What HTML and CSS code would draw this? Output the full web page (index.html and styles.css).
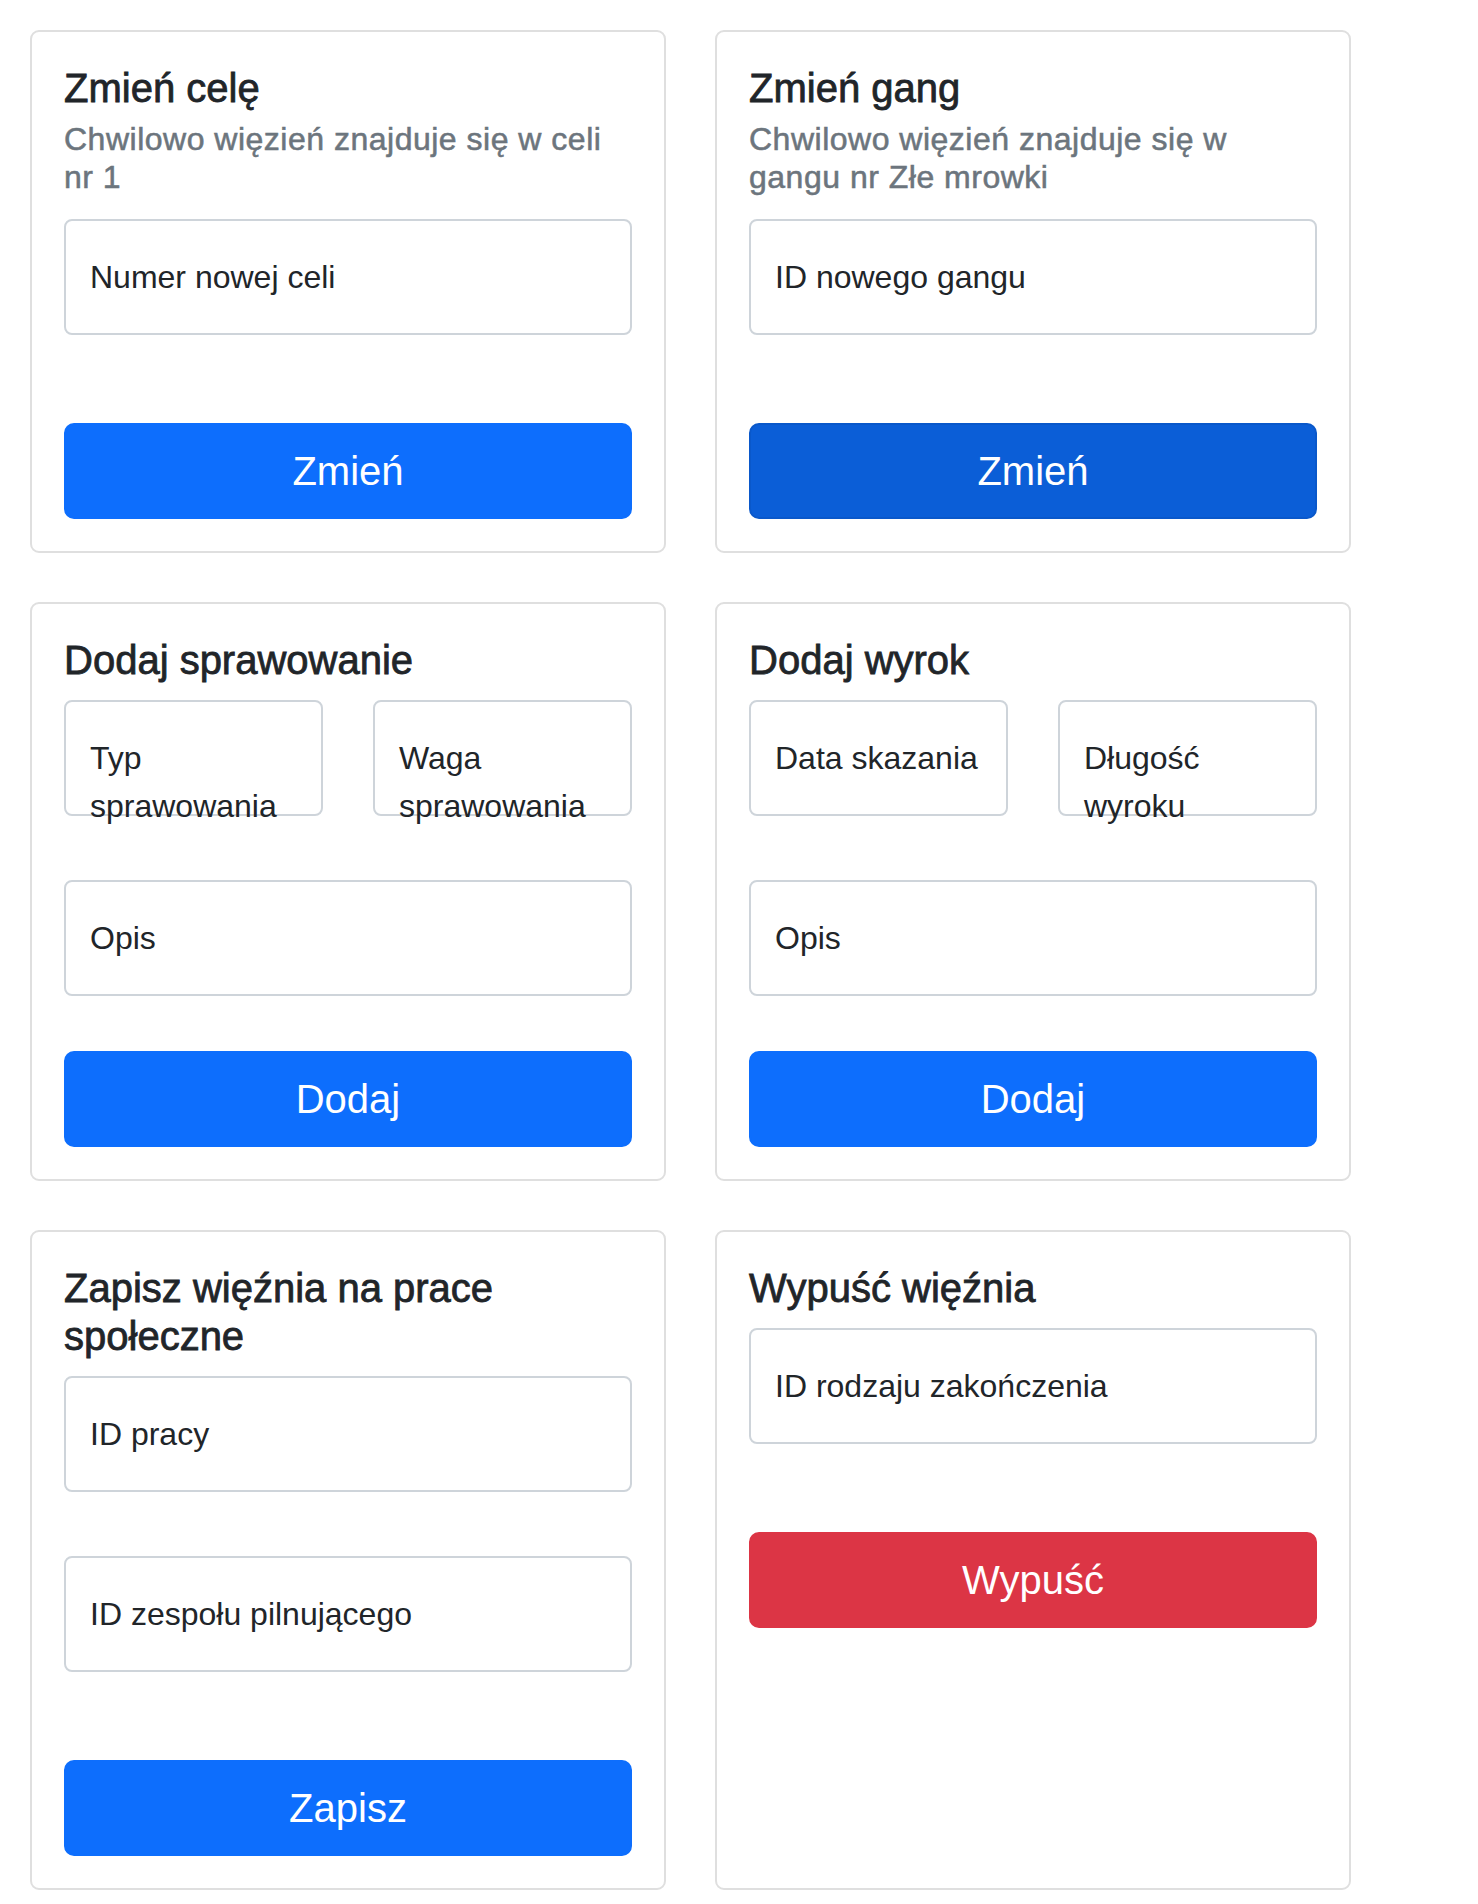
FILE: index.html
```html
<!DOCTYPE html>
<html lang="pl">
<head>
<meta charset="utf-8">
<title>Więzień – akcje</title>
<link rel="stylesheet" href="styles.css">
</head>
<body>
<main class="grid">
  <section class="card">
    <h5 class="card-title">Zmień celę</h5>
    <h6 class="card-subtitle">Chwilowo więzień znajduje się w celi nr 1</h6>
    <div class="field">
      <input class="control" type="text" id="cela">
      <label for="cela">Numer nowej celi</label>
    </div>
    <button class="btn btn-primary gap-long">Zmień</button>
  </section>

  <section class="card">
    <h5 class="card-title">Zmień gang</h5>
    <h6 class="card-subtitle">Chwilowo więzień znajduje się w gangu nr Złe mrowki</h6>
    <div class="field">
      <input class="control" type="text" id="gang">
      <label for="gang">ID nowego gangu</label>
    </div>
    <button class="btn btn-primary btn-active gap-long">Zmień</button>
  </section>

  <section class="card">
    <h5 class="card-title">Dodaj sprawowanie</h5>
    <div class="field-row">
      <div class="field">
        <input class="control" type="text" id="typ">
        <label for="typ">Typ sprawowania</label>
      </div>
      <div class="field">
        <input class="control" type="text" id="waga">
        <label for="waga">Waga sprawowania</label>
      </div>
    </div>
    <div class="field">
      <input class="control" type="text" id="opis1">
      <label for="opis1">Opis</label>
    </div>
    <button class="btn btn-primary gap-short">Dodaj</button>
  </section>

  <section class="card">
    <h5 class="card-title">Dodaj wyrok</h5>
    <div class="field-row">
      <div class="field">
        <input class="control" type="text" id="data">
        <label for="data">Data skazania</label>
      </div>
      <div class="field">
        <input class="control" type="text" id="dlugosc">
        <label for="dlugosc">Długość wyroku</label>
      </div>
    </div>
    <div class="field">
      <input class="control" type="text" id="opis2">
      <label for="opis2">Opis</label>
    </div>
    <button class="btn btn-primary gap-short">Dodaj</button>
  </section>

  <section class="card">
    <h5 class="card-title">Zapisz więźnia na prace społeczne</h5>
    <div class="field field-spaced">
      <input class="control" type="text" id="praca">
      <label for="praca">ID pracy</label>
    </div>
    <div class="field">
      <input class="control" type="text" id="zespol">
      <label for="zespol">ID zespołu pilnującego</label>
    </div>
    <button class="btn btn-primary gap-long">Zapisz</button>
  </section>

  <section class="card">
    <h5 class="card-title">Wypuść więźnia</h5>
    <div class="field">
      <input class="control" type="text" id="koniec">
      <label for="koniec">ID rodzaju zakończenia</label>
    </div>
    <button class="btn btn-danger gap-long">Wypuść</button>
  </section>
</main>
</body>
</html>
```

FILE: styles.css
```css
* {
  box-sizing: border-box;
}

html, body {
  margin: 0;
  background: #ffffff;
}

body {
  font-family: "Liberation Sans", Arial, Helvetica, sans-serif;
  color: #212529;
  font-size: 32px;
  line-height: 1.5;
}

.grid {
  display: grid;
  grid-template-columns: 636px 636px;
  column-gap: 49px;
  row-gap: 49px;
  padding: 30px 0 0 30px;
  align-items: stretch;
}

.card {
  display: flex;
  flex-direction: column;
  align-items: stretch;
  background: #ffffff;
  border: 2px solid #dfdfdf;
  border-radius: 9px;
  padding: 32px;
}

.card-title {
  margin: 0 0 16px;
  font-size: 40px;
  line-height: 48px;
  font-weight: 400;
  color: #212529;
  -webkit-text-stroke: 0.8px #212529;
}

.card-subtitle {
  margin: -8px 0 22.5px;
  font-size: 32px;
  line-height: 38.4px;
  font-weight: 400;
  letter-spacing: 0.5px;
  color: #6c757d;
  -webkit-text-stroke: 0.55px #6c757d;
}

.field-row {
  display: grid;
  grid-template-columns: 1fr 1fr;
  column-gap: 50px;
  margin-bottom: 64px;
}

.field {
  position: relative;
  height: 116px;
}

.field-spaced {
  margin-bottom: 64px;
}

.control {
  display: block;
  width: 100%;
  height: 116px;
  margin: 0;
  padding: 0 24px;
  border: 2px solid #ced4da;
  border-radius: 8px;
  background: #ffffff;
  font: inherit;
  color: #212529;
}

.field label {
  position: absolute;
  top: 0;
  left: 0;
  width: 100%;
  height: 100%;
  padding: 32px 24px;
  border: 2px solid transparent;
  font-size: 32px;
  line-height: 48px;
  color: #212529;
  pointer-events: none;
}

.btn {
  display: block;
  width: 100%;
  height: 96px;
  padding: 16px 32px;
  border: 2px solid transparent;
  border-radius: 10px;
  font-family: inherit;
  font-size: 40px;
  line-height: 60px;
  font-weight: 400;
  color: #ffffff;
  text-align: center;
  cursor: pointer;
}

.btn-primary {
  background: #0d6efd;
  border-color: #0d6efd;
}

.btn-active {
  background: #0b5ed7;
  border-color: #0a58ca;
}

.btn-danger {
  background: #dc3545;
  border-color: #dc3545;
}

.gap-long {
  margin-top: 88px;
}

.gap-short {
  margin-top: 55px;
}
```
